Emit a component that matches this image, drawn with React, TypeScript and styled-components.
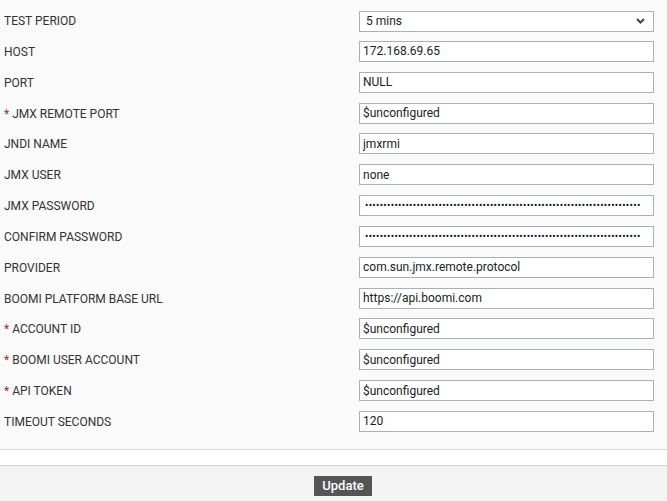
import React, { useState } from "react";
import styled, { createGlobalStyle } from "styled-components";

const GlobalStyle = createGlobalStyle`
  html, body {
    margin: 0;
    padding: 0;
    background: #f4f4f4;
    font-family: Roboto, "Liberation Sans", Arial, sans-serif;
  }
`;

const Page = styled.div`
  width: 667px;
  height: 501px;
  display: flex;
  flex-direction: column;
  background: #f4f4f4;
`;

const FormArea = styled.div`
  background: #fafafa;
  padding: 10px 13px 7px 4px;
  border-bottom: 1px solid #dcdcdc;
  display: grid;
  grid-template-columns: 355px 1fr;
  grid-auto-rows: 30.85px;
`;

const Label = styled.div`
  font-size: 12px;
  color: #333;
  line-height: 21px;
  padding-top: 1px;
  white-space: nowrap;
`;

const Required = styled.span`
  color: #9b2c2c;
  margin-right: 3px;
`;

const TextInput = styled.input`
  box-sizing: border-box;
  width: 295px;
  height: 21px;
  margin: 0;
  padding: 0 3px;
  border: 1px solid #aab0ba;
  border-radius: 0;
  background: #fff;
  font-family: Roboto, "Liberation Sans", Arial, sans-serif;
  font-size: 12px;
  color: #222;
  outline: none;

  &[type="password"] {
    font-size: 10px;
    letter-spacing: 0.3px;
    padding-left: 5px;
    color: #111;
  }
`;

const SelectWrap = styled.div`
  position: relative;
  width: 295px;
  height: 21px;
`;

const Select = styled.select`
  appearance: none;
  box-sizing: border-box;
  width: 100%;
  height: 21px;
  margin: 0;
  padding: 0 6px;
  border: 1px solid #aab0ba;
  border-radius: 0;
  background: #fff;
  font-family: Roboto, "Liberation Sans", Arial, sans-serif;
  font-size: 12px;
  color: #222;
  outline: none;
`;

const Chevron = styled.svg`
  position: absolute;
  right: 9px;
  top: 8px;
  pointer-events: none;
`;

const Spacer = styled.div`
  height: 15px;
  background: #fff;
  border-bottom: 1px solid #d0d0d0;
`;

const Footer = styled.div`
  flex: 1;
  display: flex;
  justify-content: center;
  align-items: flex-start;
  padding: 10px 0 0 19px;
`;

const Button = styled.button`
  height: 20px;
  width: 58px;
  padding: 0;
  border: none;
  background: #555;
  color: #fff;
  font-family: Roboto, "Liberation Sans", Arial, sans-serif;
  font-size: 13px;
  font-weight: 500;
  cursor: pointer;
`;

type Field = {
  label: string;
  value: string;
  required?: boolean;
  password?: boolean;
};

const fields: Field[] = [
  { label: "HOST", value: "172.168.69.65" },
  { label: "PORT", value: "NULL" },
  { label: "JMX REMOTE PORT", value: "$unconfigured", required: true },
  { label: "JNDI NAME", value: "jmxrmi" },
  { label: "JMX USER", value: "none" },
  { label: "JMX PASSWORD", value: "x".repeat(75), password: true },
  { label: "CONFIRM PASSWORD", value: "x".repeat(75), password: true },
  { label: "PROVIDER", value: "com.sun.jmx.remote.protocol" },
  { label: "BOOMI PLATFORM BASE URL", value: "https://api.boomi.com" },
  { label: "ACCOUNT ID", value: "$unconfigured", required: true },
  { label: "BOOMI USER ACCOUNT", value: "$unconfigured", required: true },
  { label: "API TOKEN", value: "$unconfigured", required: true },
  { label: "TIMEOUT SECONDS", value: "120" },
];

export default function App() {
  const [period, setPeriod] = useState("5");

  return (
    <Page>
      <GlobalStyle />
      <FormArea>
        <Label>TEST PERIOD</Label>
        <SelectWrap>
          <Select value={period} onChange={(e) => setPeriod(e.target.value)}>
            <option value="1">1 min</option>
            <option value="5">5 mins</option>
            <option value="10">10 mins</option>
            <option value="15">15 mins</option>
          </Select>
          <Chevron width="9" height="6" viewBox="0 0 9 6">
            <path d="M1 1 L4.5 4.5 L8 1" fill="none" stroke="#444" strokeWidth="2" />
          </Chevron>
        </SelectWrap>
        {fields.map((f) => (
          <React.Fragment key={f.label}>
            <Label>
              {f.required && <Required>*</Required>}
              {f.label}
            </Label>
            <TextInput
              type={f.password ? "password" : "text"}
              defaultValue={f.value}
            />
          </React.Fragment>
        ))}
      </FormArea>
      <Spacer />
      <Footer>
        <Button>Update</Button>
      </Footer>
    </Page>
  );
}
